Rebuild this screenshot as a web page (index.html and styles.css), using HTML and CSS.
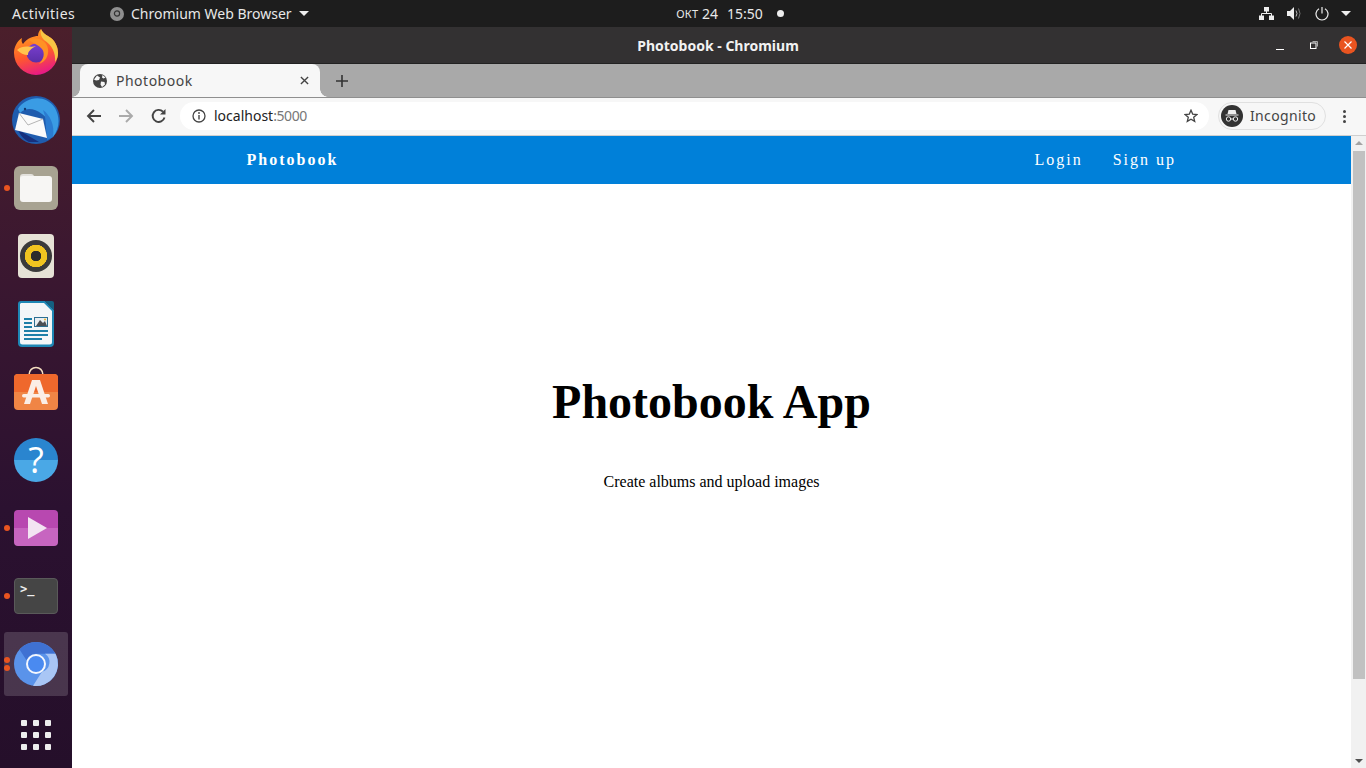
FILE: index.html
```html
<!DOCTYPE html>
<html lang="en">
<head>
    <meta charset="UTF-8">
    <meta name="viewport" content="width=device-width, initial-scale=1.0">
    <title>Photobook</title>
    <link rel="stylesheet" href="styles.css">
</head>
<body>
    <!-- GNOME top bar -->
    <header class="topbar">
        <div class="topbar-left">
            <span class="activities">Activities</span>
            <span class="app-menu">
                <svg class="app-menu-icon" viewBox="0 0 14 14"><circle cx="7" cy="7" r="7" fill="#8f8f8f"/><circle cx="7" cy="6.500" r="2.600" fill="none" stroke="#333" stroke-width="1.200"/></svg>
                Chromium Web Browser
                <i class="caret"></i>
            </span>
        </div>
        <div class="clock"><span class="clock-month">ОКТ</span> 24<span class="clock-time">15:50</span><i class="clock-dot"></i></div>
        <div class="tray">
            <svg class="tray-net" viewBox="0 0 15 13"><path d="M5 0h5v4.500H5zM0 8.500h5V13H0zM10 8.500h5V13h-5z" fill="#eee"/><path d="M7.500 4v3M2.500 9V6.500h10V9" fill="none" stroke="#eee"/></svg>
            <svg class="tray-vol" viewBox="0 0 15 13"><path d="M0 4h3l4-4v13L3 9H0z" fill="#eee"/><path d="M9 3.500q2 3 0 6" fill="none" stroke="#bbb"/><path d="M11.500 1.500q3 5 0 10" fill="none" stroke="#777"/></svg>
            <svg class="tray-power" viewBox="0 0 14 14"><path d="M7 0v6.500" stroke="#eee" stroke-width="1.200"/><path d="M4 1.800a6 6 0 1 0 6 0" fill="none" stroke="#eee" stroke-width="1.200"/></svg>
            <i class="caret"></i>
        </div>
    </header>

    <div class="desktop">
        <!-- Ubuntu dock -->
        <nav class="dock">
            <div class="dock-item">
                <svg viewBox="0 0 44 46" class="icon-firefox">
                    <defs>
                        <linearGradient id="fx" x1="0.300" y1="0" x2="0.600" y2="1"><stop offset="0" stop-color="#ffa51f"/><stop offset="0.550" stop-color="#ff5a2c"/><stop offset="1" stop-color="#e6168a"/></linearGradient>
                        <linearGradient id="fx-core" x1="0" y1="0" x2="0" y2="1"><stop offset="0" stop-color="#7b3fd0"/><stop offset="1" stop-color="#5a2fa8"/></linearGradient>
                    </defs>
                    <path d="M27 0C29 5 33 6 37 9C42 13 44 19 44 24A22 22 0 0 1 0 24C0 18 3 12 8 9C7 12 8 14 9 15C13 9 20 7 24 7C24 4 25 2 27 0Z" fill="url(#fx)"/>
                    <path d="M27 0C29 5 33 6 37 9C42 13 44 19 44 24C44 28 43 30 41 33C42 24 38 16 30 11C27 8 26 4 27 0Z" fill="#f6c544"/>
                    <circle cx="22" cy="24" r="9.500" fill="url(#fx-core)"/>
                    <path d="M3 21C9 15 16 19 22 17C17 20 14 22 14 26C10 26 6 24 3 21Z" fill="#ffc54e"/>
                    <path d="M15 11C24 7 33 12 34 20C35 27 31 33 25 35C30 30 31 24 28 20C25 16 20 15 15 11Z" fill="#ff9125"/>
                </svg>
            </div>
            <div class="dock-item">
                <svg viewBox="0 0 48 48" class="icon-48">
                    <circle cx="24" cy="24" r="24" fill="#1f5cae"/>
                    <path d="M6 13C13 1 33-3 43 12C48 21 48 32 41 41C41 33 37 23 30 18C22 12 14 11 8 17z" fill="#3a9ce4"/>
                    <path d="M31 14C38 19 43 29 41 41L35 44L33 20z" fill="#2b7bd0"/>
                    <path d="M5 30C6 37 11 43 17 46L27 46L10 36z" fill="#16307e"/>
                    <path d="M7 17l24 6 4 19-32-8z" fill="#fafafa"/>
                    <path d="M7 17l9 12 15-6" fill="none" stroke="#b5b5b5"/>
                    <circle cx="13" cy="13" r="1.200" fill="#123a70"/>
                </svg>
            </div>
            <div class="dock-item has-pip">
                <i class="pip"></i>
                <div class="files-tile"><i class="folder-tab"></i><i class="folder"></i></div>
            </div>
            <div class="dock-item">
                <div class="speaker-tile"><i class="speaker-cone"></i></div>
            </div>
            <div class="dock-item">
                <svg viewBox="0 0 36 46" class="icon-doc">
                    <path d="M3 0h24l9 9v33a4 4 0 0 1-4 4H4a4 4 0 0 1-4-4V3a3 3 0 0 1 3-3z" fill="#1e87b5"/>
                    <path d="M3 2h23l8 8v31a2.500 2.500 0 0 1-2.500 2.500h-27A2.500 2.500 0 0 1 2 41V3z" fill="#f3f6f8"/>
                    <path d="M27 0h7a2 2 0 0 1 2 2v7z" fill="#145f80"/>
                    <path d="M6 17h8v2H6zM6 21h8v2H6zM6 25h8v2H6zM6 29h24v2H6zM6 33h24v2H6zM6 37h18v2H6z" fill="#1c7fa8"/>
                    <rect x="16" y="16" width="14" height="10" fill="#2c6f92"/>
                    <rect x="17" y="17" width="12" height="8" fill="#e8eef2"/>
                    <path d="M18 25l4-6 3 3 2-2 2 5z" fill="#4a4f55"/>
                    <circle cx="27" cy="18.500" r="1" fill="#f0b020"/>
                </svg>
            </div>
            <div class="dock-item">
                <svg viewBox="0 4 44 44" class="icon-44">
                    <path d="M15 9c0-10 14-10 14 0" fill="none" stroke="#f5dfc0" stroke-width="1.500"/>
                    <rect y="8" width="44" height="36" rx="4" fill="#f08545"/>
                    <path d="M0 12a4 4 0 0 1 4-4h36a4 4 0 0 1 4 4v14H0z" fill="#ef682c"/>
                    <path d="M18 14h8l8 24h-6l-6-18-6 18h-6z" fill="#fbeee6"/>
                    <rect x="8" y="28" width="28" height="3.500" rx="1.700" fill="#fbeee6"/>
                </svg>
            </div>
            <div class="dock-item">
                <div class="help-tile">?</div>
            </div>
            <div class="dock-item has-pip">
                <i class="pip"></i>
                <div class="videos-tile"><i class="play"></i></div>
            </div>
            <div class="dock-item has-pip">
                <i class="pip"></i>
                <div class="terminal-tile">&gt;_</div>
            </div>
            <div class="dock-item active">
                <i class="pip pip-top"></i>
                <i class="pip pip-bottom"></i>
                <svg viewBox="0 0 44 44" class="icon-44">
                    <circle cx="22" cy="22" r="22" fill="#5a93ea"/>
                    <path d="M22 0a22 22 0 0 1 19.500 11.800H22a10 10 0 0 0-9.500 6.500L5.500 7.500A22 22 0 0 1 22 0z" fill="#3f71d2"/>
                    <path d="M41.500 11.800A22 22 0 0 1 19 43.800l9-14a10 10 0 0 0 3-18z" fill="#a9c6f5"/>
                    <circle cx="22" cy="22" r="9" fill="#4a8af0" stroke="#f4f7fd" stroke-width="2"/>
                </svg>
            </div>
            <div class="dock-apps">
                <i></i><i></i><i></i><i></i><i></i><i></i><i></i><i></i><i></i>
            </div>
        </nav>

        <!-- Browser window -->
        <section class="window">
            <div class="titlebar">
                <span class="window-title">Photobook - Chromium</span>
                <div class="window-buttons">
                    <i class="win-min"></i>
                    <svg class="win-restore" viewBox="0 0 8 8"><rect x="0.500" y="2" width="5.500" height="5.500" fill="none" stroke="#fff"/><path d="M2.500 0.500h5v5" fill="none" stroke="#aaa"/></svg>
                    <span class="win-close">
                        <svg viewBox="0 0 8 8"><path d="M0.500 0.500l7 7M7.500 0.500l-7 7" stroke="#fff" stroke-width="1.200"/></svg>
                    </span>
                </div>
            </div>

            <div class="tabstrip">
                <div class="tab">
                    <svg class="favicon" viewBox="0 0 14 14"><circle cx="7" cy="7" r="7" fill="#444"/><path d="M4 1.500l3 2-1 2.500-3 .5-2-1zM8 7.500l3.500.5 .5 2.500L9 13 7.500 10.500zM9.500 1l3 2.500-2 1-1.500-1z" fill="#f7f7f7"/></svg>
                    <span class="tab-title">Photobook</span>
                    <svg class="tab-close" viewBox="0 0 10 10"><path d="M1 1l8 8M9 1l-8 8" stroke="#444" stroke-width="1.500"/></svg>
                </div>
                <svg class="new-tab" viewBox="0 0 12 12"><path d="M6 0v12M0 6h12" stroke="#333" stroke-width="1.600"/></svg>
            </div>

            <div class="toolbar">
                <svg class="tool" viewBox="0 0 16 16"><path d="M15 8H2M8 2L2 8l6 6" fill="none" stroke="#444" stroke-width="1.900"/></svg>
                <svg class="tool tool-forward" viewBox="0 0 16 16"><path d="M1 8h13M8 2l6 6-6 6" fill="none" stroke="#aaa" stroke-width="1.900"/></svg>
                <svg class="tool" viewBox="0 0 16 16"><path d="M13.500 9.500A6 6 0 1 1 12 3.700" fill="none" stroke="#444" stroke-width="1.900"/><path d="M14.500 1v5.500H9z" fill="#444"/></svg>
                <div class="omnibox">
                    <svg class="omni-info" viewBox="0 0 14 14"><circle cx="7" cy="7" r="6" fill="none" stroke="#444" stroke-width="1.300"/><path d="M7 6v4.500" stroke="#444" stroke-width="1.400"/><circle cx="7" cy="4" r="0.900" fill="#444"/></svg>
                    <span class="url">localhost<span class="url-port">:5000</span></span>
                    <svg class="omni-star" viewBox="0 0 14 14"><path d="M7 1.200l1.700 3.900 4.200.4-3.200 2.800 1 4.100L7 10.200l-3.700 2.200 1-4.100L1.100 5.500l4.200-.4z" fill="none" stroke="#444" stroke-width="1.300"/></svg>
                </div>
                <div class="incognito">
                    <svg class="incognito-icon" viewBox="0 0 22 22"><circle cx="11" cy="11" r="11" fill="#333"/><path d="M7.500 5h7l1 4h-9z" fill="#eee"/><path d="M4.500 10h13" stroke="#eee"/><circle cx="7.500" cy="14" r="2.200" fill="none" stroke="#eee"/><circle cx="14.500" cy="14" r="2.200" fill="none" stroke="#eee"/><path d="M9.700 14h2.600" stroke="#eee"/></svg>
                    <span class="incognito-label">Incognito</span>
                </div>
                <div class="kebab"><i></i><i></i><i></i></div>
            </div>

            <div class="viewport">
                <div class="page">
                    <div class="navbar">
                        <a class="brand">Photobook</a>
                        <div class="nav-links">
                            <a class="nav-link">Login</a>
                            <a class="nav-link">Sign up</a>
                        </div>
                    </div>
                    <main class="hero">
                        <h1>Photobook App</h1>
                        <p>Create albums and upload images</p>
                    </main>
                </div>
                <div class="scrollbar">
                    <i class="arrow-up"></i>
                    <i class="thumb"></i>
                    <i class="arrow-down"></i>
                </div>
            </div>
        </section>
    </div>
</body>
</html>
```
FILE: styles.css
```css
* {
    box-sizing: border-box;
}

html, body {
    height: 100%;
}

body {
    margin: 0;
    overflow: hidden;
    display: flex;
    flex-direction: column;
    font-family: "Noto Sans", "Open Sans", sans-serif;
    background-color: #2c1128;
}

svg, i {
    display: block;
    flex: none;
}

/* top bar */
.topbar {
    position: relative;
    z-index: 2;
    height: 27px;
    flex: none;
    display: flex;
    align-items: center;
    background-color: #1d1d1d;
    color: #e8e8e8;
    font-size: 14px;
}

.topbar-left {
    flex: 1;
    display: flex;
    align-items: center;
    padding-left: 12px;
}

.activities {
    width: 98px;
    letter-spacing: 0.5px;
}

.app-menu {
    display: flex;
    align-items: center;
    gap: 7px;
}

.app-menu-icon {
    width: 14px;
    height: 14px;
}

.caret {
    width: 0;
    height: 0;
    border-left: 5px solid transparent;
    border-right: 5px solid transparent;
    border-top: 5px solid #eee;
}

.clock {
    display: flex;
    align-items: center;
    white-space: pre;
    margin-left: 97px;
}

.clock-month {
    font-size: 11px;
    letter-spacing: 0.3px;
}

.clock-time {
    margin-left: 9px;
}

.clock-dot {
    width: 7px;
    height: 7px;
    border-radius: 50%;
    background-color: #eee;
    margin-left: 14px;
}

.tray {
    flex: 1;
    display: flex;
    align-items: center;
    justify-content: flex-end;
    padding-right: 15px;
}

.tray-net {
    width: 15px;
    height: 13px;
    margin-right: 13px;
}

.tray-vol {
    width: 15px;
    height: 13px;
    margin-right: 13px;
}

.tray-power {
    width: 14px;
    height: 14px;
    margin-right: 12px;
}

/* dock */
.desktop {
    flex: 1;
    min-height: 0;
    display: flex;
}

.dock {
    width: 72px;
    flex: none;
    display: flex;
    flex-direction: column;
    overflow: hidden;
    background: linear-gradient(#4b1f2b 0%, #3c1830 30%, #2b1130 65%, #250f2a 100%);
}

.dock-item {
    position: relative;
    height: 64px;
    margin: 0 4px 4px;
    display: flex;
    align-items: center;
    justify-content: center;
    flex: none;
}

.dock-item:first-child {
    margin-top: -7px;
}

.dock-item.active {
    background-color: rgba(255, 255, 255, 0.16);
    border-radius: 3px;
}

.pip {
    position: absolute;
    left: 0;
    top: 29px;
    width: 6px;
    height: 6px;
    border-radius: 50%;
    background-color: #e95420;
}

.pip-top {
    top: 25px;
}

.pip-bottom {
    top: 33px;
}

.icon-firefox {
    width: 44px;
    height: 46px;
}

.icon-44 {
    width: 44px;
    height: 44px;
    overflow: visible;
}

.icon-48 {
    width: 48px;
    height: 48px;
}

.icon-doc {
    width: 36px;
    height: 46px;
}

.files-tile {
    position: relative;
    width: 44px;
    height: 44px;
    border-radius: 6px;
    background-color: #a8a392;
}

.folder {
    position: absolute;
    left: 6px;
    top: 10px;
    width: 32px;
    height: 26px;
    border-radius: 3px;
    background-color: #f7f6f4;
}

.folder-tab {
    position: absolute;
    left: 6px;
    top: 8px;
    width: 14px;
    height: 6px;
    border-radius: 3px 3px 0 0;
    background-color: #e4e2dd;
}

.speaker-tile {
    width: 36px;
    height: 44px;
    border-radius: 4px;
    background-color: #e6e2d6;
    display: flex;
    align-items: center;
    justify-content: center;
}

.speaker-cone {
    width: 32px;
    height: 32px;
    border-radius: 50%;
    background: radial-gradient(#2c2c2c 0 5px, #f0c420 5.500px 11px, #3a3a3a 11.500px);
}

.help-tile {
    width: 44px;
    height: 44px;
    border-radius: 50%;
    background: linear-gradient(#2a85cf 50%, #4aa8e6 50%);
    color: #fff;
    font-family: "Open Sans", sans-serif;
    font-size: 36px;
    line-height: 44px;
    text-align: center;
}

.videos-tile {
    width: 44px;
    height: 36px;
    border-radius: 4px;
    background: linear-gradient(#b848b0 50%, #c765c0 50%);
    display: flex;
    align-items: center;
    justify-content: center;
}

.play {
    width: 0;
    height: 0;
    border-top: 11px solid transparent;
    border-bottom: 11px solid transparent;
    border-left: 19px solid #f3e4f2;
    margin-left: 3px;
}

.terminal-tile {
    width: 44px;
    height: 36px;
    border-radius: 4px;
    background-color: #454545;
    border: 1px solid #5a5a5a;
    color: #eee;
    font-family: "DejaVu Sans Mono", monospace;
    font-size: 12px;
    font-weight: 700;
    line-height: 16px;
    padding: 2px 0 0 5px;
}

.dock-apps {
    display: grid;
    grid-template-columns: repeat(3, 6px);
    grid-auto-rows: 6px;
    gap: 6px;
    margin: 20px 0 0 21px;
}

.dock-apps i {
    background-color: #eee;
    border-radius: 1px;
}

/* browser window */
.window {
    flex: 1;
    min-width: 0;
    display: flex;
    flex-direction: column;
}

.titlebar {
    height: 37px;
    flex: none;
    position: relative;
    display: flex;
    align-items: center;
    justify-content: center;
    background-color: #333132;
    border-bottom: 1px solid #222;
    color: #f2f2f2;
}

.window-title {
    font-size: 14px;
    font-weight: 700;
    margin-left: -2px;
}

.window-buttons {
    position: absolute;
    top: 0;
    right: 0;
    height: 100%;
    display: flex;
    align-items: center;
    padding-right: 9px;
}

.win-min {
    width: 8px;
    height: 1px;
    background-color: #fff;
    margin: 8px 26px 0 0;
}

.win-restore {
    width: 8px;
    height: 8px;
    margin-right: 21px;
}

.win-close {
    width: 18px;
    height: 18px;
    border-radius: 50%;
    background-color: #e95420;
    display: flex;
    align-items: center;
    justify-content: center;
}

.win-close svg {
    width: 8px;
    height: 8px;
}

.tabstrip {
    height: 34px;
    flex: none;
    display: flex;
    align-items: center;
    padding-left: 8px;
    background-color: #a9a9a9;
    border-bottom: 1px solid #8f8f8f;
}

.tab {
    position: relative;
    width: 240px;
    height: 33px;
    display: flex;
    align-items: center;
    padding: 0 11px 0 13px;
    border-radius: 8px 8px 0 0;
    background-color: #f7f7f7;
    color: #444;
    font-size: 14px;
}

/* flared bottom corners of the tab */
.tab::before, .tab::after {
    content: "";
    position: absolute;
    bottom: 0;
    width: 8px;
    height: 8px;
}

.tab::before {
    left: -8px;
    background: radial-gradient(circle at 0 0, transparent 7.500px, #f7f7f7 8px);
}

.tab::after {
    right: -8px;
    background: radial-gradient(circle at 100% 0, transparent 7.500px, #f7f7f7 8px);
}

.favicon {
    width: 14px;
    height: 14px;
    margin-right: 9px;
}

.tab-title {
    flex: 1;
    letter-spacing: 0.5px;
}

.tab-close {
    width: 9px;
    height: 9px;
}

.new-tab {
    width: 12px;
    height: 12px;
    margin-left: 16px;
}

.toolbar {
    height: 38px;
    flex: none;
    display: flex;
    align-items: center;
    padding: 0 0 1px 14px;
    background-color: #f7f7f7;
    border-bottom: 1px solid #cfcfcf;
}

.tool {
    width: 16px;
    height: 16px;
    margin-right: 16px;
}

.tool-forward {
    margin-right: 17px;
}

.omnibox {
    width: 1029px;
    height: 28px;
    margin-left: -3px;
    display: flex;
    align-items: center;
    padding: 0 11px 0 12px;
    border-radius: 14px;
    background-color: #fff;
    font-size: 14px;
    color: #222;
}

.omni-info {
    width: 14px;
    height: 14px;
    margin-right: 8px;
}

.url {
    flex: 1;
    padding-bottom: 1px;
}

.url-port {
    color: #777;
    letter-spacing: -0.4px;
}

.omni-star {
    width: 14px;
    height: 14px;
}

.incognito {
    width: 108px;
    height: 28px;
    margin-left: 9px;
    display: flex;
    align-items: center;
    padding-left: 2px;
    border: 1px solid #e0e0e0;
    border-radius: 14px;
    color: #444;
    font-size: 14px;
}

.incognito-icon {
    width: 22px;
    height: 22px;
    margin-right: 7px;
}

.incognito-label {
    letter-spacing: 0.35px;
    padding-bottom: 1px;
}

.kebab {
    display: flex;
    flex-direction: column;
    gap: 2px;
    margin-left: 17px;
}

.kebab i {
    width: 3px;
    height: 3px;
    border-radius: 50%;
    background-color: #444;
}

/* page */
.viewport {
    flex: 1;
    min-height: 0;
    display: flex;
    background-color: #fff;
}

.page {
    flex: 1;
    min-width: 0;
    font-family: "Liberation Serif", serif;
    color: #000;
}

.navbar {
    height: 48px;
    display: flex;
    align-items: center;
    justify-content: space-between;
    padding: 0 175px 0 174.500px;
    background-color: #0080d9;
    color: #fff;
    font-size: 16px;
    letter-spacing: 2px;
}

.brand {
    font-weight: 700;
}

.nav-links {
    display: flex;
    gap: 30px;
}

.hero {
    padding-top: 190px;
    text-align: center;
}

.hero h1 {
    margin: 0;
    font-size: 48px;
    line-height: 55px;
}

.hero p {
    margin: 44px 0 0;
    font-size: 16px;
    line-height: 18px;
}

.scrollbar {
    width: 15px;
    flex: none;
    position: relative;
    padding: 15px 1px 0 2px;
    background-color: #f1f1f1;
}

.thumb {
    height: 528px;
    background-color: #c1c1c1;
}

.arrow-up, .arrow-down {
    position: absolute;
    left: 4px;
    width: 0;
    height: 0;
    border-left: 4px solid transparent;
    border-right: 4px solid transparent;
}

.arrow-up {
    top: 5px;
    border-bottom: 4px solid #a3a3a3;
}

.arrow-down {
    bottom: 5px;
    border-top: 4px solid #505050;
}
```
